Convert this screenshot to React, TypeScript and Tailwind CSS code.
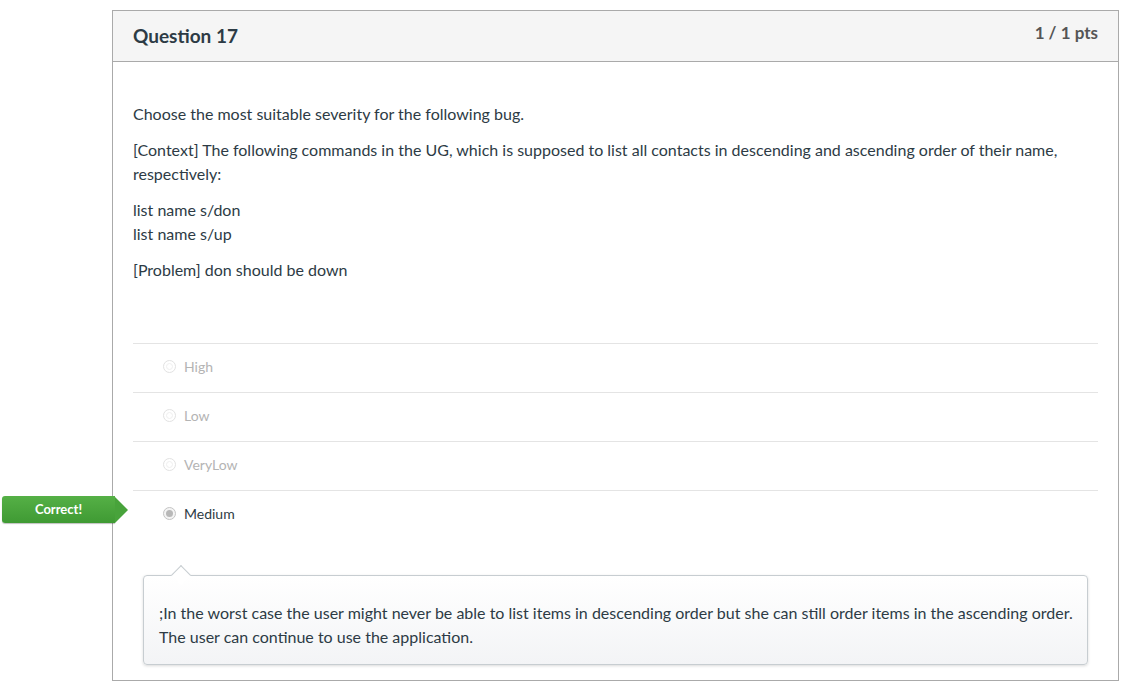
import React from "react";

const answers = [
  { label: "High", selected: false },
  { label: "Low", selected: false },
  { label: "VeryLow", selected: false },
  { label: "Medium", selected: true },
];

const Radio: React.FC<{ checked: boolean }> = ({ checked }) =>
  checked ? (
    <span className="flex h-[13px] w-[13px] items-center justify-center rounded-full border border-[#c4c4c4] bg-[#f4f4f4]">
      <span className="h-[7px] w-[7px] rounded-full bg-[#b8b8b8]" />
    </span>
  ) : (
    <span className="flex h-[13px] w-[13px] items-center justify-center rounded-full border border-[#e2e2e2] bg-white">
      <span className="h-[7px] w-[7px] rounded-full border border-[#efefef]" />
    </span>
  );

const CorrectBadge = () => (
  <div className="absolute left-[-131px] top-[5px] flex h-[27px] items-center">
    <div className="flex h-full w-[113px] items-center justify-center rounded-l-[3px] bg-gradient-to-b from-[#55b046] to-[#3f9a33] text-[13px] font-bold text-white shadow-[0_1px_1px_rgba(0,0,0,0.25)]">
      Correct!
    </div>
    <div className="h-0 w-0 border-y-[13.5px] border-l-[13px] border-y-transparent border-l-[#48a33b]" />
  </div>
);

export default function App() {
  return (
    <div className="min-h-[693px] bg-white pl-[112px] pr-[16px] pt-[10px] font-['Lato','Liberation_Sans',sans-serif] text-[#2d3b45]">
      <div className="w-[1007px] border border-[#aaaaaa]">
        <div className="flex h-[51px] items-start justify-between border-b border-[#aaaaaa] bg-[#f5f5f5] px-[20px]">
          <h2 className="pt-[11px] text-[19px] font-bold text-[#2d3b45]">Question 17</h2>
          <span className="pt-[9px] text-[17px] font-bold text-[#555555]">1 / 1 pts</span>
        </div>
        <div className="px-[20px] pb-[15px]">
          <div className="pt-[40px] text-[16px] leading-[24px]">
            <p className="mb-[12px]">Choose the most suitable severity for the following bug.</p>
            <p className="mb-[12px]">
              [Context] The following commands in the UG, which is supposed to list all contacts in descending and
              ascending order of their name, respectively:
            </p>
            <p className="mb-[12px]">
              list name s/don
              <br />
              list name s/up
            </p>
            <p>[Problem] don should be down</p>
          </div>
          <div className="mt-[61px]">
            {answers.map((a) => (
              <div
                key={a.label}
                className="relative flex h-[49px] items-center gap-[8px] border-t border-[#e4e4e4] pb-[3px] pl-[30px] text-[14px]"
              >
                {a.selected && <CorrectBadge />}
                <Radio checked={a.selected} />
                <span className={a.selected ? "text-[#2d3b45]" : "text-[#b4b4b4]"}>{a.label}</span>
              </div>
            ))}
          </div>
          <div className="relative mx-[10px] mt-[36px] rounded-[4px] border border-[#c7cdd1] bg-gradient-to-b from-white to-[#f3f4f6] pb-[15px] pl-[15px] pr-[10px] pt-[25px] text-[16px] leading-[24px] shadow-[0_1px_3px_rgba(0,0,0,0.15)]">
            <div className="absolute left-[30px] top-[-8px] h-[14px] w-[14px] rotate-45 border-l border-t border-[#c7cdd1] bg-white" />
            <p className="whitespace-nowrap">
              ;In the worst case the user might never be able to list items in descending order but she can still order
              items in the ascending order.
            </p>
            <p>The user can continue to use the application.</p>
          </div>
        </div>
      </div>
    </div>
  );
}
